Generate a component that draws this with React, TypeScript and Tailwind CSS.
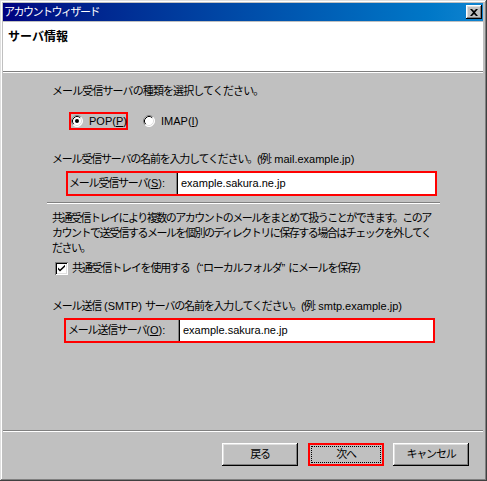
import type { ReactNode } from 'react'

const raised =
  'shadow-[inset_-1px_-1px_0_#000,inset_1px_1px_0_#fff,inset_-2px_-2px_0_#808080,inset_2px_2px_0_#dfdfdf]'

function Radio({ checked }: { checked?: boolean }) {
  return (
    <svg width="12" height="12" viewBox="0 0 12 12" className="shrink-0">
      <circle cx="6" cy="6" r="5.5" fill="#fff" />
      <path d="M9.89 2.11 A5.5 5.5 0 0 0 2.11 9.89" stroke="#808080" fill="none" />
      <path d="M9.18 2.82 A4.5 4.5 0 0 0 2.82 9.18" stroke="#000" fill="none" />
      <path d="M9.89 2.11 A5.5 5.5 0 0 1 2.11 9.89" stroke="#fff" fill="none" />
      <path d="M9.18 2.82 A4.5 4.5 0 0 1 2.82 9.18" stroke="#dfdfdf" fill="none" />
      {checked && <circle cx="6" cy="6" r="2" fill="#000" />}
    </svg>
  )
}

function CheckBox() {
  return (
    <div className="h-[13px] w-[13px] shrink-0 bg-white shadow-[inset_1px_1px_0_#808080,inset_-1px_-1px_0_#fff,inset_2px_2px_0_#000,inset_-2px_-2px_0_#dfdfdf]">
      <svg width="13" height="13" viewBox="0 0 13 13">
        <path d="M3 5.5 L5 7.5 L10 2.8 L10 4.8 L5 9.5 L3 7.5 Z" fill="#000" />
      </svg>
    </div>
  )
}

function ServerField({
  label,
  accel,
  value,
  labelClass,
  className,
}: {
  label: string
  accel: string
  value: string
  labelClass: string
  className: string
}) {
  return (
    <div className={`flex h-[25px] w-[371px] border-2 border-[#f00] ${className}`}>
      <div className={`flex shrink-0 items-center whitespace-nowrap ${labelClass}`}>
        {label}
        <span className="tracking-normal">
          (<span className="underline underline-offset-1">{accel}</span>):
        </span>
      </div>
      <div className="flex flex-1 items-center bg-white pl-[5px] font-['Liberation_Sans',sans-serif] tracking-normal shadow-[inset_1px_0_0_#808080,inset_2px_0_0_#000]">
        {value}
      </div>
    </div>
  )
}

function Btn({ children, focused, className = '' }: { children: ReactNode; focused?: boolean; className?: string }) {
  if (focused) {
    return (
      <div className={`flex h-[23px] w-[76px] items-center justify-center border-2 border-[#f00] ${className}`}>
        <div className="flex h-[17px] w-[70px] items-center justify-center border border-dotted border-black">
          {children}
        </div>
      </div>
    )
  }
  return (
    <div className={`flex h-[23px] w-[76px] items-center justify-center ${raised} ${className}`}>
      {children}
    </div>
  )
}

export default function App() {
  return (
    <div className="flex h-[481px] w-[487px] flex-col bg-[#c0c0c0] pb-[3px] pl-[3px] pr-[4px] pt-[3px] font-['Liberation_Sans','Noto_Sans_CJK_JP',sans-serif] text-[11px] leading-[13px] tracking-[-1.2px] text-black shadow-[inset_-1px_-1px_0_#404040,inset_1px_1px_0_#dfdfdf,inset_-2px_-2px_0_#808080,inset_2px_2px_0_#fff]">
      {/* title bar */}
      <div className="flex h-[18px] shrink-0 items-center justify-between bg-linear-to-r from-[#000080] to-[#1084d0] pl-[1px] pr-[1px]">
        <span className="tracking-[-1.5px] text-white">アカウントウィザード</span>
        <div className={`flex h-[14px] w-[16px] items-center justify-center bg-[#c0c0c0] ${raised}`}>
          <svg width="8" height="7" viewBox="0 0 8 7">
            <path d="M0 0h2l2 2 2-2h2L5 3.5 8 7H6L4 5 2 7H0l3-3.5z" fill="#000" />
          </svg>
        </div>
      </div>

      {/* header */}
      <div className="mt-px h-[49px] shrink-0 bg-white pl-[5px] pt-[8px]">
        <span className="text-[12px] font-bold leading-[14px] tracking-normal">サーバ情報</span>
      </div>
      <div className="h-px shrink-0 bg-[#808080]" />
      <div className="h-px shrink-0 bg-white" />

      {/* body */}
      <div className="flex flex-1 flex-col pl-[49px]">
        <p className="mt-[12px] whitespace-nowrap tracking-[-0.9px]">メール受信サーバの種類を選択してください。</p>

        <div className="mt-[14px] flex h-[18px] items-center">
          <div className="ml-[17px] flex h-[18px] w-[59px] items-center border-2 border-[#f00]">
            <Radio checked />
            <span className="ml-[6px] font-['Liberation_Sans',sans-serif] tracking-normal">
              POP(<span className="underline underline-offset-1">P</span>)
            </span>
          </div>
          <div className="ml-[15px] flex items-center">
            <Radio />
            <span className="ml-[6px] font-['Liberation_Sans',sans-serif] tracking-normal">
              IMAP(<span className="underline underline-offset-1">I</span>)
            </span>
          </div>
        </div>

        <p className="mt-[23px] whitespace-nowrap">
          メール受信サーバの名前を入力してください。(例:
          <span className="tracking-normal"> mail.example.jp)</span>
        </p>

        <ServerField
          label="メール受信サーバ"
          accel="S"
          value="example.sakura.ne.jp"
          labelClass="w-[108px] pl-[1px]"
          className="ml-[14px] mt-[5px]"
        />

        <div className="ml-[-5px] mt-[6px] w-[393px]">
          <div className="h-px bg-[#808080]" />
          <div className="h-px bg-white" />
        </div>

        <p className="mt-[7px] whitespace-nowrap leading-[15px] tracking-[-1.5px]">
          共通受信トレイにより複数のアカウントのメールをまとめて扱うことができます。このア
          <br />
          カウントで送受信するメールを個別のディレクトリに保存する場合はチェックを外してく
          <br />
          ださい。
        </p>

        <div className="ml-[3px] mt-[6px] flex h-[13px] items-center">
          <CheckBox />
          <span className="ml-[4px] whitespace-nowrap">
            共通受信トレイを使用する（<span className="tracking-normal">“</span>ローカルフォルダ
            <span className="tracking-normal">” </span>にメールを保存）
          </span>
        </div>

        <p className="mt-[25px] whitespace-nowrap">
          メール送信<span className="tracking-normal"> (SMTP) </span>サーバの名前を入力してください。(例:
          <span className="tracking-normal"> smtp.example.jp)</span>
        </p>

        <ServerField
          label="メール送信サーバ"
          accel="O"
          value="example.sakura.ne.jp"
          labelClass="w-[112px] pl-[2px]"
          className="ml-[12px] mt-[5px]"
        />
      </div>

      {/* footer */}
      <div className="h-px shrink-0 bg-[#808080]" />
      <div className="h-px shrink-0 bg-white" />
      <div className="flex h-[46px] shrink-0 items-start justify-end pr-[14px] pt-[11px]">
        <Btn className="mr-[10px]">戻る</Btn>
        <Btn focused className="mr-[9px]">
          次へ
        </Btn>
        <Btn>キャンセル</Btn>
      </div>
    </div>
  )
}
